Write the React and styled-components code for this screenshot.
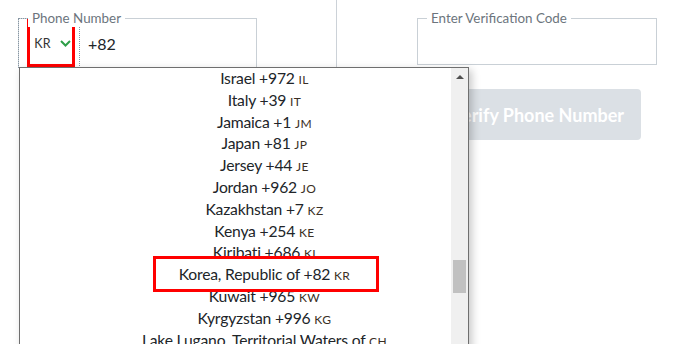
import React from "react";
import styled, { createGlobalStyle } from "styled-components";

const Global = createGlobalStyle`
  html, body {
    margin: 0;
    padding: 0;
    background: #fff;
  }
  body {
    font-family: "Lato", "Liberation Sans", sans-serif;
    color: #212529;
  }
`;

const Page = styled.div`
  position: relative;
  width: 674px;
  height: 344px;
  overflow: hidden;
  display: grid;
  grid-template-columns: 337px 1fr;
`;

const Column = styled.div`
  padding: ${(p) => p.$pad};
  border-right: ${(p) => (p.$divider ? "1px solid #ccd2d8" : "none")};
`;

const Field = styled.div`
  position: relative;
  display: flex;
  align-items: center;
  width: ${(p) => p.$width}px;
  height: ${(p) => p.$height}px;
  border: 1px solid #c9d0d6;
`;

const Legend = styled.span`
  position: absolute;
  top: -10px;
  left: 9px;
  padding: 0 4px;
  background: #fff;
  font-size: 13.4px;
  line-height: 18px;
  color: #6c757d;
`;

const CodeSelect = styled.div`
  position: relative;
  box-sizing: border-box;
  align-self: stretch;
  margin: -1px 0 -1px -1px;
  width: 62px;
  border: 1px dotted #8796a3;
  display: flex;
  align-items: center;
  justify-content: center;
  gap: 9px;
  padding-left: 7px;
`;

const CodeText = styled.span`
  font-size: 12.5px;
  color: #333;
  letter-spacing: 0.3px;
`;

const Mark = styled.div`
  position: absolute;
  box-sizing: border-box;
  border: 3px solid #f00;
  top: ${(p) => p.$top}px;
  left: ${(p) => p.$left}px;
  width: ${(p) => p.$w}px;
  height: ${(p) => p.$h}px;
  pointer-events: none;
`;

const PhoneValue = styled.span`
  padding-left: 8px;
  font-size: 16px;
  color: #212529;
`;

const VerifyButton = styled.button`
  display: block;
  margin: 24px 0 0 17px;
  width: 207px;
  height: 51px;
  border: none;
  border-radius: 4px;
  background: #dbe0e5;
  color: #fff;
  font-family: inherit;
  font-size: 18px;
  font-weight: 700;
`;

const Dropdown = styled.div`
  position: absolute;
  top: 67px;
  left: 19px;
  width: 450px;
  height: 300px;
  box-sizing: border-box;
  border: 1px solid #6f6f6f;
  background: #fff;
  display: flex;
  box-shadow: 3px 3px 8px rgba(0, 0, 0, 0.22);
`;

const OptionList = styled.ul`
  flex: 1;
  margin: 0;
  padding: 0 0 0 58px;
  list-style: none;
`;

const Option = styled.li`
  height: 21.8px;
  line-height: 21.8px;
  text-align: center;
  font-size: 15.7px;
  letter-spacing: -0.2px;
  color: #212529;
  white-space: nowrap;
`;

const Iso = styled.span`
  font-size: 12px;
  letter-spacing: 0.4px;
  color: #3a2f25;
`;

const Scrollbar = styled.div`
  width: 17px;
  background: #f0f0f0;
  display: flex;
  flex-direction: column;
  align-items: center;
`;

const Arrow = styled.div`
  margin-top: 7px;
  width: 0;
  height: 0;
  border-left: 4px solid transparent;
  border-right: 4px solid transparent;
  border-bottom: 4px solid #505050;
`;

const Thumb = styled.div`
  margin-top: 181px;
  width: 13px;
  height: 33px;
  background: #c1c1c1;
`;

const countries = [
  ["Israel", "+972", "IL"],
  ["Italy", "+39", "IT"],
  ["Jamaica", "+1", "JM"],
  ["Japan", "+81", "JP"],
  ["Jersey", "+44", "JE"],
  ["Jordan", "+962", "JO"],
  ["Kazakhstan", "+7", "KZ"],
  ["Kenya", "+254", "KE"],
  ["Kiribati", "+686", "KI"],
  ["Korea, Republic of", "+82", "KR"],
  ["Kuwait", "+965", "KW"],
  ["Kyrgyzstan", "+996", "KG"],
  ["Lake Lugano, Territorial Waters of", "", "CH"],
  ["Lao People's Democratic Republic", "+856", "LA"],
];

function Chevron() {
  return (
    <svg width="11" height="7" viewBox="0 0 11 7">
      <path d="M1 1l4.5 4.5L10 1" fill="none" stroke="#2e9e48" strokeWidth="2" />
    </svg>
  );
}

export default function App() {
  return (
    <>
      <Global />
      <Page>
        <Column $pad="18px 0 0 18px" $divider>
          <Field $width={237} $height={48}>
            <CodeSelect>
              <CodeText>KR</CodeText>
              <Chevron />
              <Mark $top={0} $left={8} $w={48} $h={48} />
            </CodeSelect>
            <Legend>Phone Number</Legend>
            <PhoneValue>+82</PhoneValue>
          </Field>
        </Column>
        <Column $pad="18px 0 0 80px">
          <Field $width={238} $height={45}>
            <Legend>Enter Verification Code</Legend>
          </Field>
          <VerifyButton>Verify Phone Number</VerifyButton>
        </Column>
        <Dropdown>
          <OptionList>
            {countries.map(([name, code, iso]) => (
              <Option key={iso + name}>
                {name}
                {code ? ` ${code}` : ""} <Iso>{iso}</Iso>
              </Option>
            ))}
          </OptionList>
          <Scrollbar>
            <Arrow />
            <Thumb />
          </Scrollbar>
          <Mark $top={188} $left={133} $w={226} $h={36} />
        </Dropdown>
      </Page>
    </>
  );
}
